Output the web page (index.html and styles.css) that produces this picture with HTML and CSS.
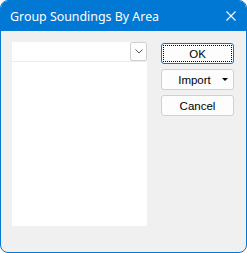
FILE: index.html
```html
<!DOCTYPE html>
<html lang="en">
<head>
  <meta charset="UTF-8">
  <title>Group Soundings By Area</title>
  <link rel="stylesheet" href="styles.css">
</head>
<body>
  <div class="window">
    <div class="titlebar">
      <span class="title">Group Soundings By Area</span>
      <svg class="close" width="10" height="10" viewBox="0 0 10 10">
        <path d="M0.5 0.5 L9.5 9.5 M9.5 0.5 L0.5 9.5" stroke="#fff" stroke-width="1.1" fill="none"/>
      </svg>
    </div>

    <div class="content">
      <div class="panel">
        <div class="combo">
          <span class="combo-btn">
            <svg width="8" height="5" viewBox="0 0 8 5">
              <path d="M0.5 0.5 L4 4 L7.5 0.5" stroke="#555" stroke-width="1" fill="none"/>
            </svg>
          </span>
        </div>
        <div class="list"></div>
      </div>

      <div class="buttons">
        <button class="btn default"><span class="focus">OK</span></button>
        <button class="btn split">Import<span class="caret"></span></button>
        <button class="btn">Cancel</button>
      </div>
    </div>
  </div>
</body>
</html>
```

FILE: styles.css
```css
body {
  margin: 0;
  font-family: "Liberation Sans", Arial, sans-serif;
}
.window {
  width: 247px;
  height: 253px;
  box-sizing: border-box;
  border: 1px solid #0078d4;
  border-radius: 8px;
  background-color: #f0f0f0;
  overflow: hidden;
  display: flex;
  flex-direction: column;
}
.titlebar {
  height: 30px;
  flex: none;
  background-color: #0078d4;
  color: #fff;
  display: flex;
  align-items: center;
  justify-content: space-between;
  padding: 0 10px 0 9px;
}
.title {
  font-family: "Noto Sans", sans-serif;
  font-size: 12.4px;
}
.close {
  display: block;
}
.content {
  display: flex;
  gap: 14px;
  padding: 11px 12px 0 11px;
}
.panel {
  width: 135px;
  height: 184px;
  background-color: #fff;
  display: flex;
  flex-direction: column;
}
.combo {
  height: 19px;
  border-bottom: 1px solid #ececec;
  display: flex;
  justify-content: flex-end;
}
.combo-btn {
  width: 17px;
  height: 19px;
  box-sizing: border-box;
  border: 1px solid #cfcfcf;
  border-radius: 2px;
  background-color: #fdfdfd;
  display: flex;
  align-items: center;
  justify-content: center;
}
.list {
  flex: 1;
}
.buttons {
  display: flex;
  flex-direction: column;
  gap: 5px;
  margin-top: 1px;
}
.btn {
  width: 73px;
  height: 21px;
  box-sizing: border-box;
  border: 1px solid #d0d0d0;
  border-radius: 3px;
  background-color: #fdfdfd;
  font-family: "Liberation Sans", Arial, sans-serif;
  font-size: 11.5px;
  color: #000;
  padding: 0;
  position: relative;
}
.btn.default {
  border-color: #0078d4;
  padding: 1px;
}
.focus {
  display: flex;
  align-items: center;
  justify-content: center;
  height: 100%;
  border: 1px dotted #000;
  box-sizing: border-box;
}
.split {
  padding-right: 6px;
}
.caret {
  position: absolute;
  right: 5px;
  top: 8px;
  width: 0;
  height: 0;
  border-left: 3px solid transparent;
  border-right: 3px solid transparent;
  border-top: 3px solid #000;
}
```
